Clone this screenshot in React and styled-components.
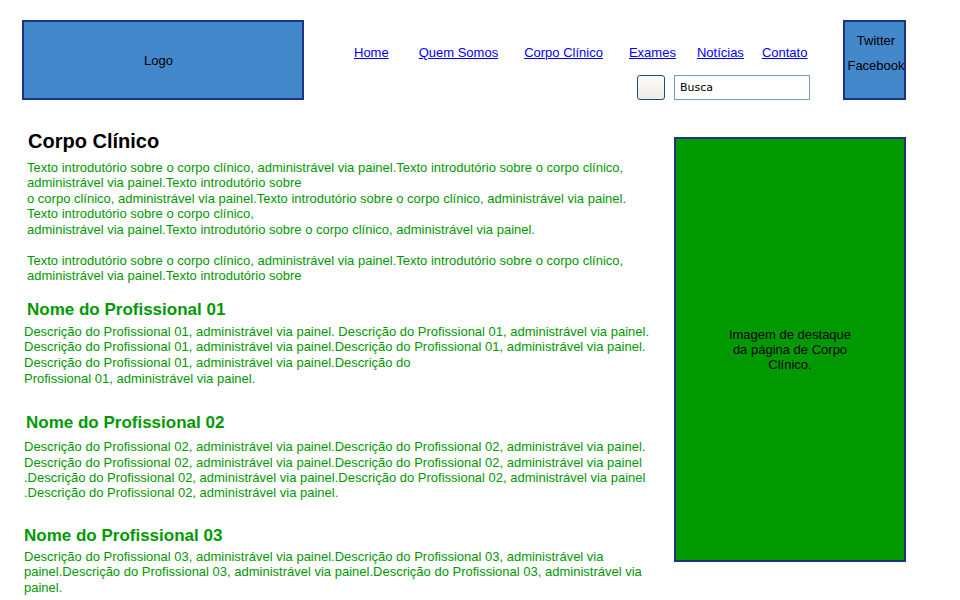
import React from "react";
import styled, { createGlobalStyle } from "styled-components";

const Global = createGlobalStyle`
  html, body { margin: 0; padding: 0; background: #fff; }
  body { font-family: "Liberation Sans", Arial, sans-serif; color: #000; }
`;

const Page = styled.div`
  width: 960px;
  height: 600px;
  overflow: hidden;
`;

const Header = styled.header`
  display: flex;
  align-items: flex-start;
  padding: 20px 0 0 22px;
  height: 80px;
`;

const BlueBox = styled.div`
  box-sizing: border-box;
  background: #4488cc;
  border: 2px solid #1f3480;
  font-size: 13px;
  display: flex;
  flex-direction: column;
  align-items: center;
  justify-content: center;
`;

const LogoBox = styled(BlueBox)`
  width: 282px;
  height: 80px;
  padding-right: 9px;
`;

const SocialBox = styled(BlueBox)`
  width: 63px;
  height: 80px;
  margin-left: 33px;
  justify-content: flex-start;
  padding-top: 11px;
  padding-left: 3px;
  gap: 10px;
  white-space: nowrap;
  line-height: 15px;
  overflow: visible;
`;

const NavArea = styled.div`
  width: 506px;
  display: flex;
  flex-direction: column;
  align-items: flex-end;
  padding-top: 25px;
`;

const Nav = styled.nav`
  display: flex;
  align-self: stretch;
  padding-left: 50px;
  font-size: 13px;
  line-height: 16px;
`;

const NavLink = styled.a`
  color: #0000ff;
  text-decoration: underline;
  margin-left: ${(p) => p.$gap}px;
`;

const SearchRow = styled.div`
  display: flex;
  align-items: center;
  gap: 9px;
  margin-top: 14px;
`;

const SearchButton = styled.button`
  box-sizing: border-box;
  width: 28px;
  height: 25px;
  border: 1px solid #1c4c7c;
  border-radius: 3px;
  background: linear-gradient(#fbfbf9, #ecebe4);
  padding: 0;
`;

const SearchInput = styled.input`
  box-sizing: border-box;
  width: 136px;
  height: 25px;
  border: 1px solid #7f9db9;
  padding: 0 5px;
  font-family: "DejaVu Sans", Tahoma, sans-serif;
  font-size: 11px;
  color: #000;
  outline: none;
`;

const Body = styled.div`
  display: flex;
  align-items: flex-start;
  margin-top: 30px;
`;

const Main = styled.main`
  width: 650px;
  padding-left: 24px;
  color: #009900;
  font-size: 13px;
  line-height: 15.4px;
`;

const Title = styled.h1`
  margin: 0 0 0 4px;
  color: #000;
  font-size: 20px;
  line-height: 22px;
  font-weight: bold;
`;

const Para = styled.p`
  margin: ${(p) => p.$top || 0}px 0 0 ${(p) => p.$indent || 0}px;
  line-height: ${(p) => p.$lh || 15.4}px;
`;

const ProName = styled.h2`
  margin: ${(p) => p.$top}px 0 0 ${(p) => p.$indent}px;
  font-size: 17px;
  line-height: 20px;
  font-weight: bold;
  color: #009900;
`;

const Feature = styled.aside`
  box-sizing: border-box;
  width: 232px;
  height: 425px;
  margin-top: 7px;
  background: #009900;
  border: 2px solid #1f3480;
  display: flex;
  align-items: center;
  justify-content: center;
  text-align: center;
  font-size: 13px;
  line-height: 15px;
  color: #000;
  padding: 0 50px;
`;

export default function App() {
  return (
    <Page>
      <Global />
      <Header>
        <LogoBox>Logo</LogoBox>
        <NavArea>
          <Nav>
            <NavLink $gap={0} href="#">Home</NavLink>
            <NavLink $gap={30} href="#">Quem Somos</NavLink>
            <NavLink $gap={26} href="#">Corpo Clínico</NavLink>
            <NavLink $gap={26} href="#">Exames</NavLink>
            <NavLink $gap={21} href="#">Notícias</NavLink>
            <NavLink $gap={18} href="#">Contato</NavLink>
          </Nav>
          <SearchRow>
            <SearchButton />
            <SearchInput defaultValue="Busca" />
          </SearchRow>
        </NavArea>
        <SocialBox>
          <span>Twitter</span>
          <span>Facebook</span>
        </SocialBox>
      </Header>
      <Body>
        <Main>
          <Title>Corpo Clínico</Title>
          <Para $indent={3} $top={8}>
            Texto introdutório sobre o corpo clínico, administrável via painel.Texto introdutório sobre o corpo clínico,
            <br />
            administrável via painel.Texto introdutório sobre
            <br />
            o corpo clínico, administrável via painel.Texto introdutório sobre o corpo clínico, administrável via painel.
            <br />
            Texto introdutório sobre o corpo clínico,
            <br />
            administrável via painel.Texto introdutório sobre o corpo clínico, administrável via painel.
          </Para>
          <Para $indent={3} $top={16}>
            Texto introdutório sobre o corpo clínico, administrável via painel.Texto introdutório sobre o corpo clínico,
            <br />
            administrável via painel.Texto introdutório sobre
          </Para>
          <ProName $top={16} $indent={3}>Nome do Profissional 01</ProName>
          <Para $top={4} $lh={15.6}>
            Descrição do Profissional 01, administrável via painel. Descrição do Profissional 01, administrável via painel.
            <br />
            Descrição do Profissional 01, administrável via painel.Descrição do Profissional 01, administrável via painel.
            <br />
            Descrição do Profissional 01, administrável via painel.Descrição do
            <br />
            Profissional 01, administrável via painel.
          </Para>
          <ProName $top={27} $indent={2}>Nome do Profissional 02</ProName>
          <Para $top={6} $lh={15.4}>
            Descrição do Profissional 02, administrável via painel.Descrição do Profissional 02, administrável via painel.
            <br />
            Descrição do Profissional 02, administrável via painel.Descrição do Profissional 02, administrável via painel
            <br />
            .Descrição do Profissional 02, administrável via painel.Descrição do Profissional 02, administrável via painel
            <br />
            .Descrição do Profissional 02, administrável via painel.
          </Para>
          <ProName $top={25} $indent={0}>Nome do Profissional 03</ProName>
          <Para $top={3} $lh={15.6}>
            Descrição do Profissional 03, administrável via painel.Descrição do Profissional 03, administrável via
            <br />
            painel.Descrição do Profissional 03, administrável via painel.Descrição do Profissional 03, administrável via
            <br />
            painel.
          </Para>
        </Main>
        <Feature>Imagem de destaque da página de Corpo Clínico.</Feature>
      </Body>
    </Page>
  );
}
